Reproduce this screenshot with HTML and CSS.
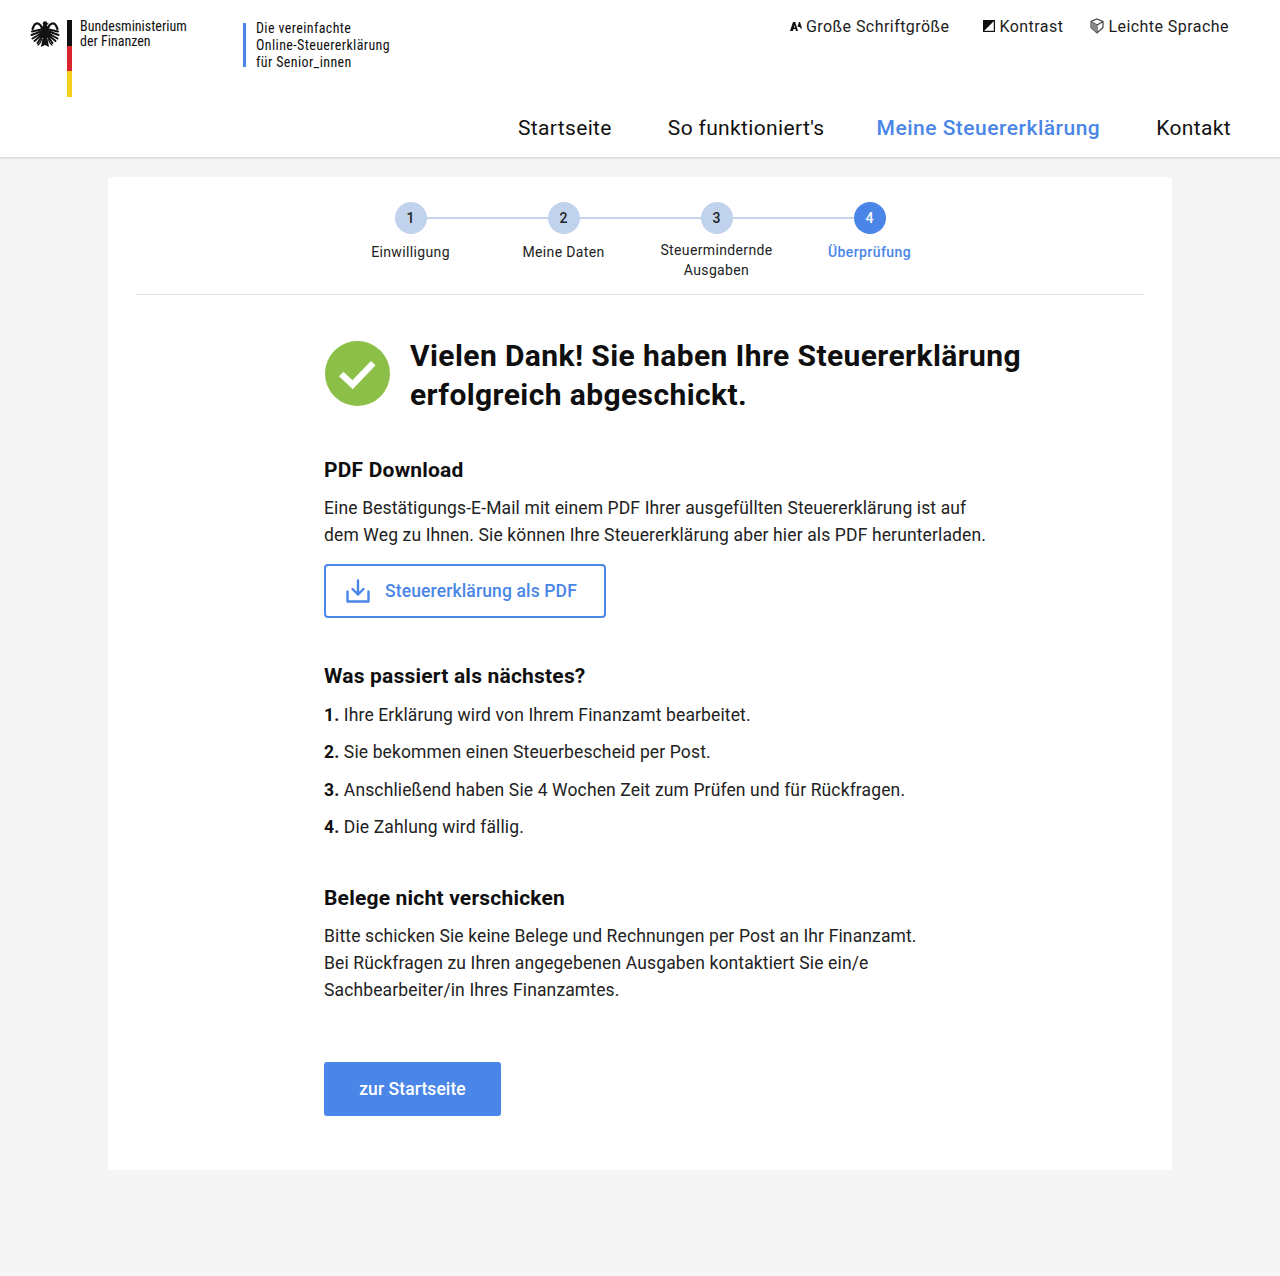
FILE: index.html
```html
<!DOCTYPE html>
<html lang="de">
<head>
<meta charset="utf-8">
<title>Steuerlotse</title>
<link rel="stylesheet" href="styles.css">
</head>
<body>
<header class="header">
  <div class="top">
    <div class="brand">
      <svg class="eagle" viewBox="0 0 30 30" width="30" height="30" aria-hidden="true">
        <g fill="none" stroke="#111" stroke-linecap="round">
          <path stroke-width="2.200" d="M12 9C10 4 6 3 4 6.500L2.500 10"/>
          <path stroke-width="2" d="M11 10.500 2 12.500M11 12.500 1.500 16M11 14.500 2.500 19.500M11.500 16 4.500 22M12 17.500 7.500 24"/>
          <path stroke-width="2.200" d="M18 9C20 4 24 3 26 6.500L27.500 10"/>
          <path stroke-width="2" d="M19 10.500 28 12.500M19 12.500 28.500 16M19 14.500 27.500 19.500M18.500 16 25.500 22M18 17.500 22.500 24"/>
          <path stroke-width="1.300" d="M12 20 9.500 24.500 8 26M18 20 20.500 24.500 22 26"/>
        </g>
        <ellipse cx="15" cy="13" rx="4" ry="7.500" fill="#111"/>
        <circle cx="15" cy="4.500" r="2.200" fill="#111"/>
        <path fill="#111" d="M16.500 3.500 19 5 16.500 6zM13.500 6h3l.5 3h-4zM12.500 19.500h5L19 28l-4-2-4 2z"/>
      </svg>
      <div class="flag"><span class="flag-black"></span><span class="flag-red"></span><span class="flag-gold"></span></div>
      <div class="ministry">Bundesministerium<br>der Finanzen</div>
      <div class="product"><span class="product-text">Die vereinfachte<br>Online-Steuererklärung<br>für Senior_innen</span></div>
    </div>
    <div class="right">
      <ul class="tools">
        <li class="tool tool-size">
          <svg viewBox="0 0 12 12" width="12" height="12" aria-hidden="true"><path fill="#111" fill-rule="evenodd" d="M0 11 3 2h2.200L8 11H6l-.5-2h-2L3 11zM3.900 7.500h1.200L4.500 5z"/><path fill="#111" d="M7.500 6.500 9 2h1l2 6.500h-1.500L10 7H8.500z"/></svg>
          Große Schriftgröße
        </li>
        <li class="tool tool-contrast">
          <svg viewBox="0 0 12 12" width="12" height="12" aria-hidden="true"><rect x=".6" y=".6" width="10.800" height="10.800" fill="#fff" stroke="#111" stroke-width="1.200"/><path fill="#111" d="M1 1h10L1 11z"/></svg>
          Kontrast
        </li>
        <li class="tool tool-easy">
          <svg viewBox="0 0 14 16" width="14" height="16" aria-hidden="true"><path fill="none" stroke="#444" stroke-width="1.200" d="M7 1 13 3.500V9.500L7 15 1 9.500V3.500zM1 3.500 7 7 13 3.500M7 7V15"/><path fill="#888" d="M1 3.500 7 7V15L1 9.500z"/></svg>
          Leichte Sprache
        </li>
      </ul>
      <nav class="nav">
        <a class="nav-link">Startseite</a>
        <a class="nav-link">So funktioniert's</a>
        <a class="nav-link nav-active">Meine Steuererklärung</a>
        <a class="nav-link nav-last">Kontakt</a>
      </nav>
    </div>
  </div>
</header>

<main class="card">
  <ol class="steps">
    <li class="step"><span class="dot">1</span><span class="step-label">Einwilligung</span></li>
    <li class="step"><span class="dot">2</span><span class="step-label">Meine Daten</span></li>
    <li class="step step-double"><span class="dot">3</span><span class="step-label">Steuermindernde<br>Ausgaben</span></li>
    <li class="step step-current"><span class="dot">4</span><span class="step-label">Überprüfung</span></li>
  </ol>

  <div class="content">
    <div class="success">
      <svg class="check" viewBox="0 0 66 66" width="65" height="65" aria-hidden="true">
        <circle cx="33" cy="33" r="33" fill="#8bbf47"/>
        <path d="M16.500 33.500 28 44.500 49 22.500" fill="none" stroke="#fff" stroke-width="6.500"/>
      </svg>
      <h1 class="title">Vielen Dank! Sie haben Ihre Steuererklärung<br>erfolgreich abgeschickt.</h1>
    </div>

    <h2 class="heading heading-pdf">PDF Download</h2>
    <p class="text">Eine Bestätigungs-E-Mail mit einem PDF Ihrer ausgefüllten Steuererklärung ist auf<br>dem Weg zu Ihnen. Sie können Ihre Steuererklärung aber hier als PDF herunterladen.</p>
    <a class="btn-outline">
      <svg viewBox="0 0 24 24" width="24" height="24" aria-hidden="true">
        <path fill="none" stroke="#4a86e8" stroke-width="2.400" stroke-linecap="round" stroke-linejoin="round" d="M12 1.500V15.500M6.500 10 12 15.500 17.500 10M1.500 12.500V22.500H22.500V12.500"/>
      </svg>
      Steuererklärung als PDF
    </a>

    <h2 class="heading heading-next">Was passiert als nächstes?</h2>
    <ol class="list">
      <li><b>1.</b> Ihre Erklärung wird von Ihrem Finanzamt bearbeitet.</li>
      <li><b>2.</b> Sie bekommen einen Steuerbescheid per Post.</li>
      <li><b>3.</b> Anschließend haben Sie 4 Wochen Zeit zum Prüfen und für Rückfragen.</li>
      <li><b>4.</b> Die Zahlung wird fällig.</li>
    </ol>

    <h2 class="heading heading-docs">Belege nicht verschicken</h2>
    <p class="text">Bitte schicken Sie keine Belege und Rechnungen per Post an Ihr Finanzamt.<br>Bei Rückfragen zu Ihren angegebenen Ausgaben kontaktiert Sie ein/e<br>Sachbearbeiter/in Ihres Finanzamtes.</p>

    <a class="btn-primary">zur Startseite</a>
  </div>
</main>
</body>
</html>
```

FILE: styles.css
```css
* { box-sizing: border-box; }
html, body { margin: 0; padding: 0; }
body {
  height: 1276px;
  background: #f5f5f5;
  color: #111;
  font-family: Roboto, "Liberation Sans", sans-serif;
  overflow: hidden;
}
.header {
  height: 157px;
  background: #fff;
  box-shadow: 0 1px 2px rgba(0, 0, 0, .16);
}
.top {
  display: flex;
  justify-content: space-between;
  height: 157px;
}
.brand {
  display: flex;
  align-items: flex-start;
  padding: 19px 0 0 30px;
}
.eagle { margin-right: 7px; }
.flag {
  display: flex;
  flex-direction: column;
  width: 5px;
  height: 77px;
  margin-top: 1px;
  margin-right: 8px;
}
.flag span { flex: 1; }
.flag-black { background: #111; }
.flag-red { background: #d8262c; }
.flag-gold { background: #f4cf1e; }
.ministry {
  width: 163px;
  font-size: 14px;
  font-stretch: 85%;
  line-height: 15px;
}
.product {
  height: 44px;
  margin-top: 4px;
  padding-left: 10px;
  border-left: 3px solid #4a86e8;
  font-size: 14px;
  font-stretch: 85%;
  letter-spacing: .38px;
  line-height: 17px;
}
.product-text { display: block; margin-top: -3px; }
.right {
  display: flex;
  flex-direction: column;
  align-items: flex-end;
  padding-right: 49px;
}
.tools {
  display: flex;
  list-style: none;
  margin: 16px 2px 0 0;
  padding: 0;
  height: 20px;
  align-items: center;
  font-size: 16px;
  letter-spacing: .45px;
  color: #1c1c1c;
}
.tool { display: flex; align-items: center; gap: 4px; white-space: nowrap; }
.tool-size { margin-right: 34px; }
.tool-contrast { margin-right: 27px; }
.nav {
  display: flex;
  margin-top: 72px;
  font-size: 21px;
  line-height: 40px;
  letter-spacing: .35px;
}
.nav-link { margin-left: 56px; white-space: nowrap; }
.nav-active { color: #4a86e8; font-weight: 500; margin-left: 52px; letter-spacing: .5px; }
.nav-last { margin-left: 56px; }
.card {
  width: 1064px;
  height: 993px;
  margin: 20px auto 0;
  padding: 0 28px;
  background: #fff;
  border-radius: 4px;
}
.steps {
  display: flex;
  justify-content: center;
  list-style: none;
  height: 118px;
  margin: 0;
  padding: 25px 0 0;
  border-bottom: 1px solid #e4e4e4;
}
.step {
  position: relative;
  display: flex;
  flex-direction: column;
  align-items: center;
  width: 153px;
  font-size: 14px;
  line-height: 19.500px;
  letter-spacing: .36px;
  text-align: center;
  color: #222;
}
.step:not(:last-child)::after {
  content: "";
  position: absolute;
  top: 15px;
  left: 50%;
  width: 100%;
  height: 2px;
  background: #c5d3e8;
}
.dot {
  position: relative;
  z-index: 1;
  width: 32px;
  height: 32px;
  margin-bottom: 9px;
  border-radius: 50%;
  background: #c0d2ec;
  font-size: 14px;
  font-weight: 500;
  letter-spacing: 0;
  line-height: 32px;
  color: #222;
}
.step-double .dot { margin-bottom: 7px; }
.step-current .dot { background: #4a86e8; color: #fff; }
.step-current .step-label { color: #4a86e8; font-weight: 500; letter-spacing: .42px; }
.content { padding-left: 188px; }
.success {
  display: flex;
  align-items: flex-start;
  gap: 20px;
  padding-top: 41px;
}
.check { margin: 5px 0 0 1px; flex: none; }
.title {
  margin: 0;
  font-size: 30px;
  font-weight: 700;
  line-height: 39px;
  letter-spacing: .4px;
  color: #0f0f0f;
}
.heading {
  margin: 0;
  font-size: 21px;
  font-weight: 700;
  line-height: 28px;
  color: #0f0f0f;
  letter-spacing: .2px;
}
.heading-pdf { margin-top: 42px; }
.heading-next { margin-top: 44px; }
.heading-docs { margin-top: 43px; }
.text {
  margin: 11px 0 0;
  font-size: 17.500px;
  line-height: 27px;
  letter-spacing: .13px;
  color: #222;
}
.btn-outline {
  display: flex;
  align-items: center;
  gap: 15px;
  width: 282px;
  height: 54px;
  margin-top: 15px;
  padding-left: 20px;
  border: 2px solid #4a86e8;
  border-radius: 4px;
  font-size: 17.500px;
  font-weight: 500;
  letter-spacing: .13px;
  color: #4a86e8;
}
.list {
  list-style: none;
  margin: 12px 0 0;
  padding: 0;
  font-size: 17.500px;
  line-height: 27px;
  letter-spacing: .13px;
  color: #222;
}
.list li { margin-bottom: 10.330px; }
.list li:last-child { margin-bottom: 0; }
.list b { color: #111; }
.btn-primary {
  display: flex;
  align-items: center;
  justify-content: center;
  width: 177px;
  height: 54px;
  margin-top: 58px;
  border-radius: 3px;
  background: #4a86e8;
  color: #fff;
  font-size: 17.500px;
  font-weight: 500;
  letter-spacing: .08px;
}
```
